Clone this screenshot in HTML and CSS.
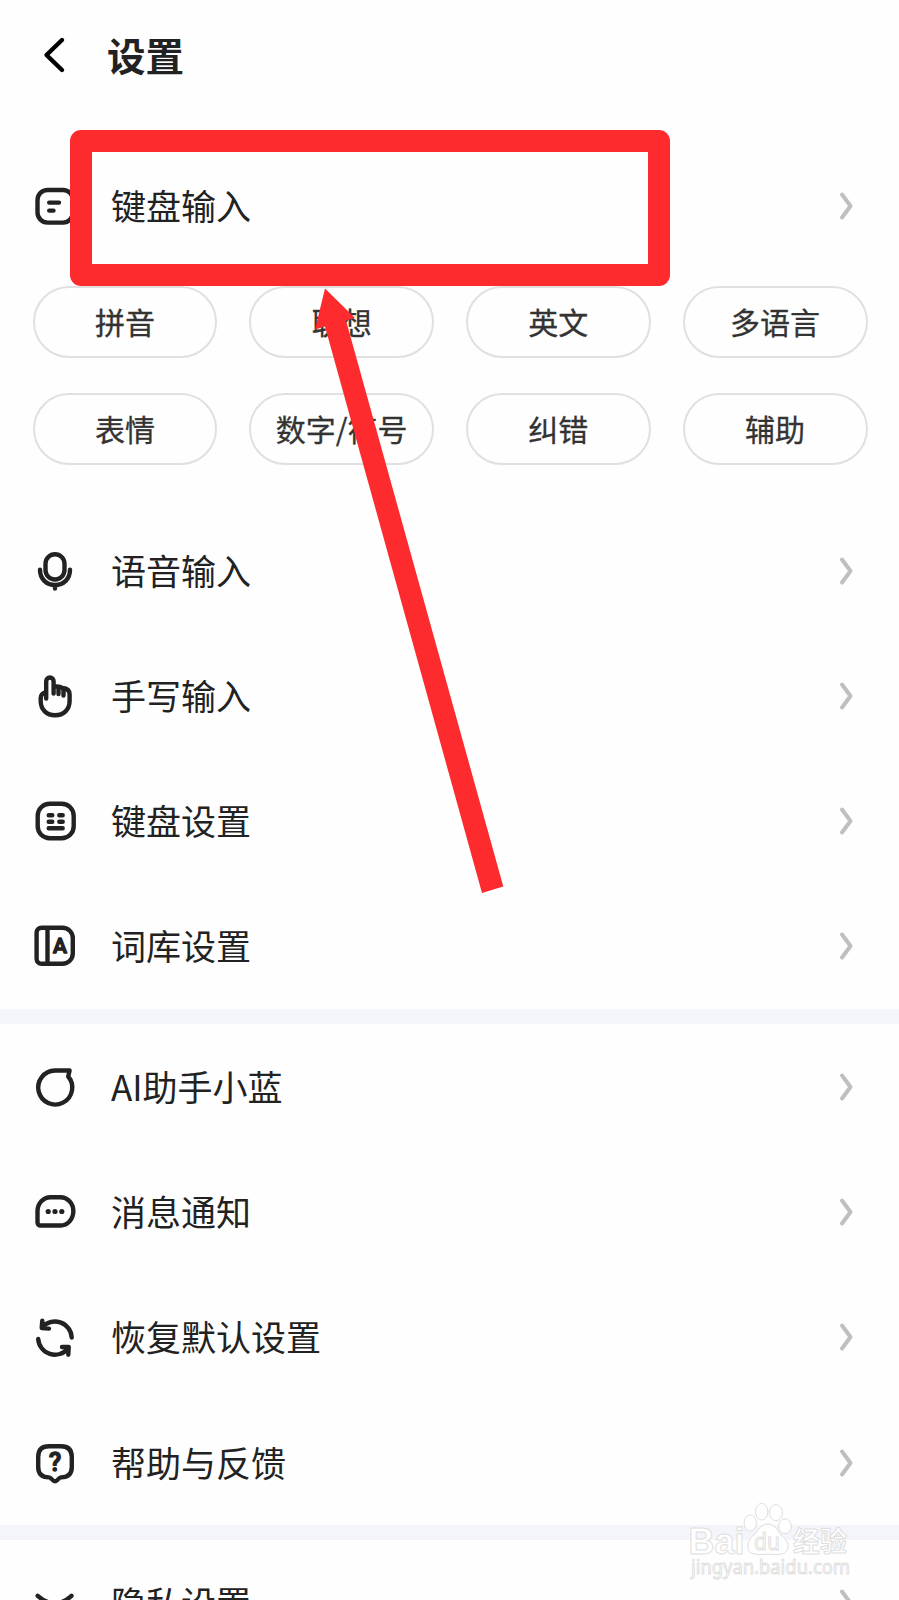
FILE: index.html
```html
<!DOCTYPE html>
<html lang="zh-CN">
<head>
  <meta charset="UTF-8">
  <meta name="viewport" content="width=device-width, initial-scale=1.0">
  <title>设置</title>
  <link rel="stylesheet" href="styles.css">
</head>
<body>
  <div class="page">
    <header class="header">
      <svg class="back" viewBox="0 0 24 40"><path d="M19 5 3.5 20 19 35"/></svg>
      <h1>设置</h1>
    </header>

    <!-- Input settings -->
    <section class="section">
      <a class="row">
        <svg class="icon" viewBox="0 0 44 44"><rect x="4.5" y="6" width="35.5" height="32.6" rx="10"/><path d="M16.2 18.6H26M16.2 26.6h4.3"/></svg>
        <span>键盘输入</span>
        <svg class="more" viewBox="0 0 14 30"><path d="M3 3.5 11.5 15 3 26.5"/></svg>
      </a>
      <div class="chips">
        <a class="chip">拼音</a>
        <a class="chip">联想</a>
        <a class="chip">英文</a>
        <a class="chip">多语言</a>
        <a class="chip">表情</a>
        <a class="chip">数字/符号</a>
        <a class="chip">纠错</a>
        <a class="chip">辅助</a>
      </div>
      <a class="row">
        <svg class="icon" viewBox="0 0 44 44"><rect x="12.5" y="5.2" width="19" height="25.3" rx="9.5"/><path d="M7 20.8C7 30 13.5 36 22 36s15-6 15-15.2M22 36v3.6"/></svg>
        <span>语音输入</span>
        <svg class="more" viewBox="0 0 14 30"><path d="M3 3.5 11.5 15 3 26.5"/></svg>
      </a>
      <a class="row">
        <svg class="icon" viewBox="0 0 44 44"><path d="M13.2 24.5V7.2a3.7 3.7 0 0 1 7.4 0V19.5M20.6 12.5h3.4c2.5 0 4 .6 5.500 1.500 4.500.3 7.100 2.500 7.100 6.500V27c0 8.500-6 14.300-14.500 14.300S7.700 35.500 7.700 27v-3c0-3 2-5 5.500-6.200M25.500 13v7M30.500 14.500v7"/></svg>
        <span>手写输入</span>
        <svg class="more" viewBox="0 0 14 30"><path d="M3 3.5 11.5 15 3 26.5"/></svg>
      </a>
      <a class="row">
        <svg class="icon" viewBox="0 0 44 44"><rect x="4.7" y="4.7" width="36" height="34.6" rx="12"/><path d="M15.700 16.200h3.600M26.300 16.200h3.400M15.700 22.700h3.600M26.300 22.700h3.400M15.700 29.300h14"/></svg>
        <span>键盘设置</span>
        <svg class="more" viewBox="0 0 14 30"><path d="M3 3.5 11.5 15 3 26.5"/></svg>
      </a>
      <a class="row">
        <svg class="icon" viewBox="0 0 44 44"><path d="M8.600 3.700H29.500A10.300 10.300 0 0 1 39.800 14V29.500A10.300 10.300 0 0 1 29.500 39.800H8.600a5 5 0 0 1-5-5V8.700a5 5 0 0 1 5-5ZM14.500 4v35.500"/><text x="27" y="29" class="letter">A</text></svg>
        <span>词库设置</span>
        <svg class="more" viewBox="0 0 14 30"><path d="M3 3.5 11.5 15 3 26.5"/></svg>
      </a>
    </section>

    <!-- Assistant, messages, help -->
    <section class="section">
      <a class="row">
        <svg class="icon" viewBox="0 0 44 44"><path d="M22 5.500H36.600L35.200 11.500A17 17 0 1 1 22 5.500Z"/></svg>
        <span>AI助手小蓝</span>
        <svg class="more" viewBox="0 0 14 30"><path d="M3 3.5 11.5 15 3 26.5"/></svg>
      </a>
      <a class="row">
        <svg class="icon" viewBox="0 0 44 44"><path d="M17.500 7.200h10A12.800 14.100 0 0 1 27.500 35.500H7.500a3 3 0 0 1-3-3V21.300A13 14.100 0 0 1 17.500 7.200Z"/><g class="dots"><circle cx="15.200" cy="21.500" r="2.600"/><circle cx="22" cy="21.500" r="2.600"/><circle cx="28.800" cy="21.500" r="2.600"/></g></svg>
        <span>消息通知</span>
        <svg class="more" viewBox="0 0 14 30"><path d="M3 3.5 11.5 15 3 26.5"/></svg>
      </a>
      <a class="row">
        <svg class="icon" viewBox="0 0 44 44"><path d="M9 12.500A16.800 16.800 0 0 1 38.700 22.500M9.300 5.800 8.700 13l7.300.6M5.200 24A16.800 16.800 0 0 0 35 33.500M29 32h6.700l-.4 7.700"/></svg>
        <span>恢复默认设置</span>
        <svg class="more" viewBox="0 0 14 30"><path d="M3 3.5 11.5 15 3 26.5"/></svg>
      </a>
      <a class="row">
        <svg class="icon" viewBox="0 0 44 44"><path d="M16 5.200H28Q38.800 5.200 38.800 16V26Q38.800 36.200 28 36.400C25.500 36.500 24.500 40.300 22 40.300S18.500 36.500 16 36.400Q5.200 36.200 5.200 26V16Q5.200 5.200 16 5.200Z"/><text x="22" y="29.500" class="letter mark">?</text></svg>
        <span>帮助与反馈</span>
        <svg class="more" viewBox="0 0 14 30"><path d="M3 3.5 11.5 15 3 26.5"/></svg>
      </a>
    </section>

    <section class="section">
      <a class="row">
        <svg class="icon" viewBox="0 0 44 44"><path d="M4.700 14.800Q22 30 38.500 14.800"/></svg>
        <span>隐私设置</span>
        <svg class="more" viewBox="0 0 14 30"><path d="M3 3.5 11.5 15 3 26.5"/></svg>
      </a>
    </section>

    <!-- Highlight box and arrow over the list -->
    <div class="highlight"></div>
    <svg class="arrow" viewBox="0 0 190 606"><path d="M11 1.500 41 31 32 33.500 189.300 599.500 168 606 11 39.500 1 42.500Z"/></svg>

    <svg class="watermark" viewBox="0 0 170 90">
      <ellipse cx="60.300" cy="23" rx="6.200" ry="8"/>
      <ellipse cx="71.700" cy="11.700" rx="6.200" ry="8.300"/>
      <ellipse cx="86" cy="12.700" rx="6.500" ry="8"/>
      <ellipse cx="95" cy="26.300" rx="6.300" ry="7.500"/>
      <path d="M78 24c-8 0-10 7-14 11-4 3-7 7-6 13 1 7 8 7 20 6 12 1 18 1 20-6 1-6-3-9-7-13-4-5-6-11-13-11Z"/>
      <text x="-1.500" y="53.500" class="brand" textLength="56" lengthAdjust="spacingAndGlyphs">Bai</text>
      <text x="64" y="49.500" class="du" textLength="26" lengthAdjust="spacingAndGlyphs">du</text>
      <text x="103" y="51.500" class="cjk" textLength="54" lengthAdjust="spacingAndGlyphs">经验</text>
      <text x="1" y="73.500" class="site" textLength="159" lengthAdjust="spacingAndGlyphs">jingyan.baidu.com</text>
    </svg>
  </div>
</body>
</html>
```
FILE: styles.css
```css
body {
    margin: 0;
    background-color: #fefefe;
    font-family: "Noto Sans CJK SC", sans-serif;
    color: #222;
}

.page {
    position: relative;
    height: 1600px;
    overflow: hidden;
}

.header {
    display: flex;
    align-items: center;
    gap: 40px;
    height: 110px;
    padding: 0 0 33px 43px;
}

.header h1 {
    margin: 0;
    padding-bottom: 3px;
    font-size: 38.5px;
    line-height: 50px;
    font-weight: 700;
}

svg {
    fill: none;
    stroke: #222;
    stroke-width: 4.4;
    stroke-linecap: round;
    stroke-linejoin: round;
    flex: none;
}

.back {
    width: 24px;
    height: 40px;
    stroke: #000;
}

.section + .section {
    border-top: 15px solid #f3f5fa;
}

.row {
    display: flex;
    align-items: center;
    height: 125.3px;
    padding: 0 46px 0 33px;
    font-size: 35px;
    line-height: 50px;
}

.row span {
    flex: 1;
    margin-left: 34px;
    padding-bottom: 2px;
}

.icon {
    width: 44px;
    height: 44px;
}

.icon .letter {
    font: 500 21px Roboto, sans-serif;
    text-anchor: middle;
    fill: #222;
    stroke-width: 1.4;
}

.icon .mark {
    font-size: 25px;
}

.icon .dots {
    fill: #222;
    stroke: none;
}

.more {
    width: 14px;
    height: 30px;
    stroke: #bfbfbf;
    stroke-width: 4;
}

.chips {
    display: grid;
    grid-template-columns: repeat(4, 1fr);
    gap: 35.6px 31.7px;
    padding: 17.5px 31.5px 42.5px 32.5px;
}

.chip {
    box-sizing: border-box;
    height: 72px;
    border: 2px solid #e0e0e0;
    border-radius: 36px;
    font-size: 30px;
    line-height: 66px;
    text-align: center;
    color: #333;
    -webkit-text-stroke: 0.3px #333;
}

.highlight {
    position: absolute;
    left: 70px;
    top: 130px;
    box-sizing: border-box;
    width: 600px;
    height: 156px;
    border: 22px solid #fd2b2d;
    border-radius: 11px;
}

.arrow {
    position: absolute;
    left: 314px;
    top: 287px;
    width: 190px;
    height: 606px;
    fill: #fd2b2d;
    stroke: none;
}

.watermark {
    position: absolute;
    left: 690px;
    top: 1500px;
    width: 170px;
    height: 90px;
    fill: #fff;
    stroke: #dedede;
    stroke-width: 1;
}

.brand {
    font: 700 37px "Liberation Sans", sans-serif;
}

.du {
    font: 400 24px "Noto Sans", sans-serif;
}

.cjk {
    font: 700 28px "Noto Sans CJK SC", sans-serif;
}

.site {
    font: 400 20px "Noto Sans", sans-serif;
}
```
